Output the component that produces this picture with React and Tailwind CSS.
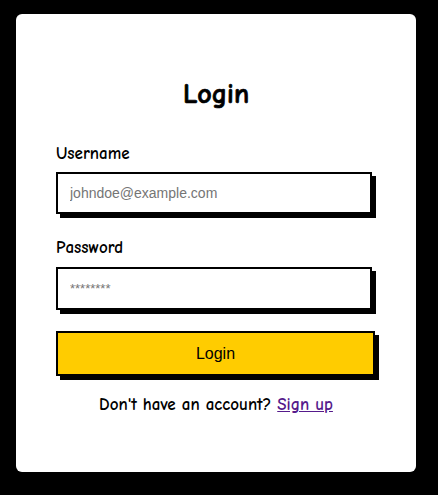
export default function App() {
  return (
    <div className="min-h-screen bg-black pl-4 pt-[14px]">
      <div className="w-[400px] h-[458px] bg-white rounded-md px-10 pt-[64px] text-black font-['Comic_Sans_MS','Comic_Neue','DejaVu_Sans',sans-serif]">
        <h2 className="text-center font-bold text-[28px] leading-[32px] [-webkit-text-stroke:0.7px_black]">Login</h2>

        <form className="flex flex-col mt-[34px]" onSubmit={(e) => e.preventDefault()}>
          <label className="text-[17px] leading-5 font-bold">Username</label>
          <input
            type="text"
            placeholder="johndoe@example.com"
            className="mt-[8px] w-[316px] h-[42px] border-2 border-black px-3 text-[14px] font-['Liberation_Sans',Arial,sans-serif] shadow-[4px_4px_0_#000] outline-none placeholder:text-[#757575]"
          />

          <label className="text-[17px] leading-5 font-bold mt-6">Password</label>
          <input
            type="password"
            placeholder="********"
            className="mt-[9px] w-[316px] h-[43px] border-2 border-black px-3 text-[13px] font-['Liberation_Sans',Arial,sans-serif] shadow-[4px_4px_0_#000] outline-none placeholder:text-[#757575]"
          />

          <button
            type="submit"
            className="mt-[21px] w-[319px] h-[45px] bg-[#ffcc00] border-2 border-black shadow-[4px_4px_0_#000] text-[16px] font-['Liberation_Sans',Arial,sans-serif] text-black"
          >
            Login
          </button>
        </form>

        <p className="text-center text-[17px] leading-5 font-bold mt-[19px]">
          Don't have an account?{" "}
          <a href="#" className="text-[#551a8b] underline">
            Sign up
          </a>
        </p>
      </div>
    </div>
  );
}
